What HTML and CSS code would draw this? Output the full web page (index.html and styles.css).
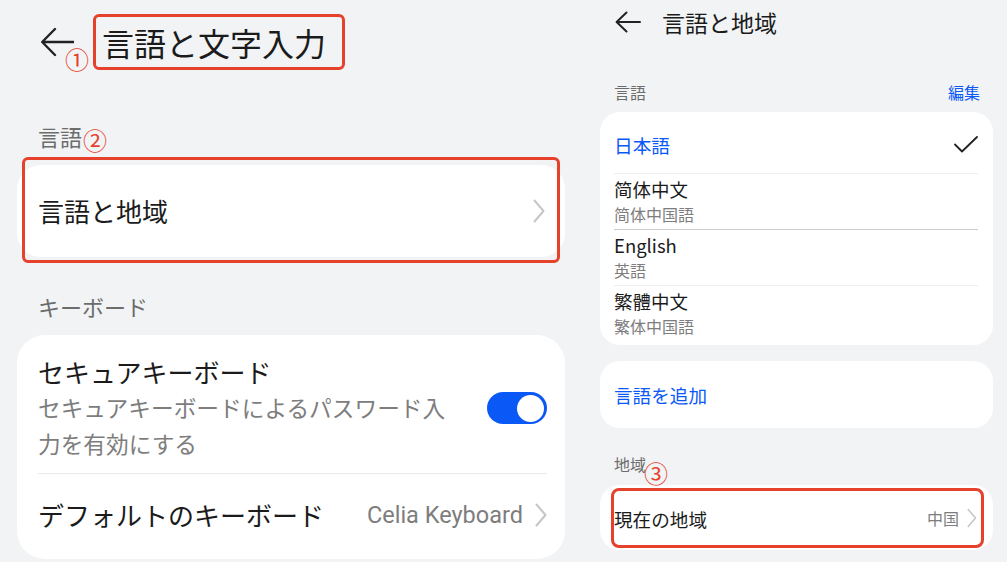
FILE: index.html
```html
<!DOCTYPE html>
<html lang="ja">
<head>
<meta charset="utf-8">
<title>言語と文字入力</title>
<link rel="stylesheet" href="styles.css">
</head>
<body>
<div class="screen">
  <section class="panel left">
    <header class="hdr-l">
      <svg class="back-l" width="34" height="30" viewBox="0 0 34 30"><path d="M33.5 15H2.5M15 2L2.2 15L15 28" stroke="#222" stroke-width="2.4" fill="none" stroke-linecap="round" stroke-linejoin="round"/></svg>
      <h1 class="title-box">言語と文字入力</h1>
    </header>
    <span class="anno anno1">①</span>

    <div class="label-l first">言語</div>
    <span class="anno anno2">②</span>
    <div class="hl-wrap">
      <div class="card-l card1">
        <span class="row-text">言語と地域</span>
        <svg class="chev-l" width="12" height="24" viewBox="0 0 12 24"><path d="M1.5 1.5L10.5 12L1.5 22.5" stroke="#c6c6c6" stroke-width="2" fill="none" stroke-linecap="round" stroke-linejoin="round"/></svg>
      </div>
      <div class="redbox redbox1"></div>
    </div>

    <div class="label-l">キーボード</div>
    <div class="card-l card2">
      <div class="sec-row">
        <div class="sec-text">
          <div class="row-text">セキュアキーボード</div>
          <div class="sec-sub">セキュアキーボードによるパスワード入力を有効にする</div>
        </div>
        <div class="toggle"><span class="knob"></span></div>
      </div>
      <div class="def-row">
        <span class="row-text">デフォルトのキーボード</span>
        <span class="def-val">
          <span class="val-text">Celia Keyboard</span>
          <svg class="chev-l" width="12" height="24" viewBox="0 0 12 24"><path d="M1.5 1.5L10.5 12L1.5 22.5" stroke="#c6c6c6" stroke-width="2" fill="none" stroke-linecap="round" stroke-linejoin="round"/></svg>
        </span>
      </div>
    </div>
  </section>

  <section class="panel right">
    <header class="hdr-r">
      <svg class="back-r" width="26" height="22" viewBox="0 0 26 22"><path d="M25 11H1.8M11.5 1.5L1.6 11L11.5 20.5" stroke="#222" stroke-width="2" fill="none" stroke-linecap="round" stroke-linejoin="round"/></svg>
      <h2 class="title-r">言語と地域</h2>
    </header>

    <div class="label-r lang-label">
      <span>言語</span>
      <span class="edit">編集</span>
    </div>
    <div class="card-r lang-card">
      <div class="lang-row current">
        <span>日本語</span>
        <svg width="24" height="17" viewBox="0 0 24 17"><path d="M1 8.5L8 15.5L23 1" stroke="#222" stroke-width="1.8" fill="none" stroke-linecap="round" stroke-linejoin="round"/></svg>
      </div>
      <div class="lang-row">
        <div class="lang-name">简体中文</div>
        <div class="lang-sub">简体中国語</div>
      </div>
      <div class="lang-row dark">
        <div class="lang-name">English</div>
        <div class="lang-sub">英語</div>
      </div>
      <div class="lang-row">
        <div class="lang-name">繁體中文</div>
        <div class="lang-sub">繁体中国語</div>
      </div>
    </div>

    <div class="card-r add-card">言語を追加</div>

    <div class="label-r region-label">地域</div>
    <span class="anno anno3">③</span>
    <div class="card-r region-card">
      <div class="redbox2">
        <span class="region-name">現在の地域</span>
        <span class="region-val">
          <span>中国</span>
          <svg width="10" height="20" viewBox="0 0 10 20"><path d="M1.2 1.5L8.5 10L1.2 18.5" stroke="#c6c6c6" stroke-width="1.6" fill="none" stroke-linecap="round" stroke-linejoin="round"/></svg>
        </span>
      </div>
    </div>
  </section>
</div>
</body>
</html>
```

FILE: styles.css
```css
* { box-sizing: border-box; margin: 0; padding: 0; }
html, body { width: 1007px; height: 562px; overflow: hidden; }
body {
  background: #f1f3f5;
  font-family: "Noto Sans CJK JP", "Noto Sans", sans-serif;
  color: #1b1b1b;
}
.screen { display: flex; height: 562px; }
.panel { position: relative; height: 562px; }

/* ---------- left panel ---------- */
.left { width: 585px; padding: 0 20px 0 17px; }
.hdr-l {
  display: flex;
  align-items: center;
  height: 56px;
  margin-top: 14px;
  padding-left: 23px;
}
.back-l { flex: none; }
.title-box {
  margin-left: 19px;
  height: 56px;
  width: 252px;
  border: 3px solid #e6412b;
  border-radius: 6px;
  padding-left: 6px;
  display: flex;
  align-items: center;
  font-size: 32px;
  font-weight: 400;
  line-height: 1;
  color: #1b1b1b;
}
.anno {
  position: absolute;
  font-size: 24px;
  line-height: 24px;
  color: #e6412b;
}
.anno1 { left: 65px; top: 47px; }
.anno2 { left: 83px; top: 128px; }
.anno3 { left: 59px; top: 461px; }

.label-l {
  font-size: 22px;
  line-height: 30px;
  color: #6c6c6c;
  padding-left: 21px;
  margin-top: 34px;
  margin-bottom: 14px;
}
.label-l.first { margin-top: 51px; }

.hl-wrap { position: relative; }
.card-l { background: #fff; }
.card1 {
  height: 92px;
  border-radius: 24px;
  display: flex;
  align-items: center;
  justify-content: space-between;
  padding: 0 20px 0 21px;
}
.row-text { font-size: 26px; line-height: 36px; color: #1b1b1b; }
.redbox {
  position: absolute;
  border: 3px solid #e6412b;
  border-radius: 6px;
}
.redbox1 { top: -8px; bottom: -6px; left: 5px; right: 5px; }

.card2 {
  border-radius: 28px;
  padding: 19px 18px 3px 21px;
}
.sec-row {
  display: flex;
  align-items: center;
  padding-bottom: 11px;
  border-bottom: 1px solid #ebebeb;
}
.sec-text { width: 420px; }
.sec-sub {
  font-size: 22.7px;
  line-height: 36px;
  color: #7d7d7d;
}
.toggle {
  margin-left: auto;
  width: 60px;
  height: 32px;
  border-radius: 16px;
  background: #0a59f7;
  display: flex;
  align-items: center;
  justify-content: flex-end;
  padding-right: 3px;
}
.knob {
  width: 27px;
  height: 27px;
  border-radius: 50%;
  background: #fff;
}
.def-row {
  height: 82px;
  display: flex;
  align-items: center;
  justify-content: space-between;
}
.def-val { display: flex; align-items: center; gap: 12px; }
.val-text {
  font-family: Roboto, "Noto Sans", sans-serif;
  font-size: 23.5px;
  color: #7d7d7d;
}

/* ---------- right panel ---------- */
.right { width: 422px; padding: 0 14px 0 15px; }
.hdr-r {
  height: 44px;
  display: flex;
  align-items: center;
  padding-left: 15px;
}
.title-r {
  margin-left: 21px;
  font-size: 23px;
  font-weight: 400;
  line-height: 30px;
  color: #1b1b1b;
}
.label-r {
  font-size: 16px;
  line-height: 22px;
  color: #6c6c6c;
  padding: 0 13px 0 14px;
}
.lang-label {
  margin-top: 37px;
  display: flex;
  justify-content: space-between;
}
.edit { color: #0a59f7; }
.card-r { background: #fff; border-radius: 20px; }
.lang-card { margin-top: 9px; padding: 4px 15px 4px 14px; }
.lang-row { padding: 2px 0 3px; border-top: 1px solid #efefef; }
.lang-row.dark { border-top-color: #cdcdcd; }
.lang-row.current {
  border-top: none;
  height: 57px;
  padding: 0;
  display: flex;
  align-items: center;
  justify-content: space-between;
  font-size: 18.7px;
  color: #0a59f7;
}
.lang-name { font-size: 18.5px; line-height: 26px; color: #1b1b1b; }
.lang-sub { font-size: 16px; line-height: 24px; color: #7d7d7d; }

.add-card {
  margin-top: 16px;
  height: 67px;
  padding-left: 14px;
  display: flex;
  align-items: center;
  font-size: 18.6px;
  color: #0a59f7;
}
.region-label { margin-top: 25px; margin-bottom: 10px; }
.region-card { height: 65px; padding: 3px 9px 2px 11px; }
.redbox2 {
  height: 100%;
  border: 3px solid #e6412b;
  border-radius: 8px;
  display: flex;
  align-items: center;
  justify-content: space-between;
  padding-right: 4px;
}
.region-name { font-size: 18.6px; color: #1b1b1b; }
.region-val {
  display: flex;
  align-items: center;
  gap: 8px;
  font-size: 16px;
  color: #7d7d7d;
}
```
